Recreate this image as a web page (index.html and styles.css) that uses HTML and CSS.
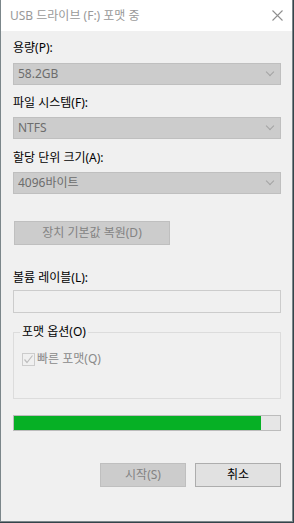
FILE: index.html
```html
<!DOCTYPE html>
<html lang="ko">
<head>
  <meta charset="UTF-8">
  <meta name="viewport" content="width=device-width, initial-scale=1.0">
  <title>USB 드라이브 (F:) 포맷 중</title>
  <link rel="stylesheet" href="styles.css">
</head>
<body>
  <!-- Format dialog -->
  <div class="window">
    <header class="titlebar">
      <span class="title">USB 드라이브 (F:) 포맷 중</span>
      <svg class="close" width="11" height="11" viewBox="0 0 11 11">
        <path d="M0.5 0.5 L10.5 10.5 M10.5 0.5 L0.5 10.5" stroke="#8f8f8f" stroke-width="1.1" fill="none"/>
      </svg>
    </header>

    <main class="content">
      <label class="label">용량(P):</label>
      <div class="combo"><span>58.2GB</span><i class="chev"></i></div>

      <label class="label gap">파일 시스템(F):</label>
      <div class="combo"><span>NTFS</span><i class="chev"></i></div>

      <label class="label gap2">할당 단위 크기(A):</label>
      <div class="combo"><span>4096바이트</span><i class="chev"></i></div>

      <button class="btn disabled restore">장치 기본값 복원(D)</button>

      <label class="label volume">볼륨 레이블(L):</label>
      <div class="textbox"></div>

      <fieldset class="group">
        <legend>포맷 옵션(O)</legend>
        <div class="check-row">
          <span class="checkbox">
            <svg width="11" height="11" viewBox="0 0 11 11">
              <path d="M1.5 5.5 L4 8.5 L9.5 1.5" stroke="#bdbdbd" stroke-width="1.2" fill="none"/>
            </svg>
          </span>
          <span class="check-text">빠른 포맷(Q)</span>
        </div>
      </fieldset>

      <div class="progress"><div class="progress-fill" style="width: 92.9%"></div></div>

      <div class="actions">
        <button class="btn disabled">시작(S)</button>
        <button class="btn">취소</button>
      </div>
    </main>
  </div>
</body>
</html>
```

FILE: styles.css
```css
/* Reset */
* {
  margin: 0;
  padding: 0;
  box-sizing: border-box;
}

body {
  background-color: #34444a;
  font-family: 'Noto Sans', 'Noto Sans CJK KR', sans-serif;
  font-size: 12px;
  line-height: 16px;
  color: #000;
}

/* Window frame */
.window {
  width: 293px;
  height: 522px;
  background-color: #f0f0f0;
  border: 1px solid #7b868a;
  border-top: none;
  display: flex;
  flex-direction: column;
}

.titlebar {
  height: 31px;
  background-color: #ffffff;
  display: flex;
  align-items: center;
  justify-content: space-between;
  padding: 0 9px 0 9px;
}

.title {
  color: #999999;
  font-size: 12px;
}

.close {
  margin-top: 0;
}

/* Content */
.content {
  display: flex;
  flex-direction: column;
  padding: 9px 11px 0 12px;
}

.label {
  display: block;
  height: 16px;
  margin-bottom: 7px;
}

.label.gap {
  margin-top: 10px;
  margin-bottom: 6px;
}

.label.gap2 {
  margin-top: 11px;
  margin-bottom: 6px;
}

.label.volume {
  margin-top: 25px;
  margin-bottom: 4px;
}

.combo {
  height: 22px;
  background-color: #cccccc;
  border: 1px solid #bfbfbf;
  display: flex;
  align-items: center;
  justify-content: space-between;
  padding: 0 5px 0 4px;
  color: #6d6d6d;
}

.chev {
  width: 6px;
  height: 6px;
  border-right: 1px solid #a3a3a3;
  border-bottom: 1px solid #a3a3a3;
  transform: rotate(45deg);
  margin-top: -4px;
  margin-right: 2px;
}

/* Buttons */
.btn {
  font-family: inherit;
  font-size: 12px;
  line-height: 16px;
  height: 24px;
  width: 86px;
  background-color: #e1e1e1;
  border: 1px solid #adadad;
  color: #000;
}

.btn.disabled {
  background-color: #cccccc;
  border-color: #bfbfbf;
  color: #838383;
}

.restore {
  width: 156px;
  margin-top: 27px;
  margin-left: 1px;
}

.textbox {
  height: 23px;
  background-color: #f0f0f0;
  border: 1px solid #cccccc;
}

/* Group box */
.group {
  margin-top: 11px;
  height: 75px;
  border: 1px solid #dcdcdc;
  padding: 0 6px;
}

.group legend {
  padding: 0 2px;
}

.check-row {
  display: flex;
  align-items: center;
  margin-top: 11px;
  margin-left: 2px;
  gap: 2px;
}

.checkbox {
  width: 13px;
  height: 13px;
  border: 1px solid #cccccc;
  background-color: #f0f0f0;
  display: flex;
  align-items: center;
  justify-content: center;
}

.check-text {
  color: #8a8a8a;
}

/* Progress */
.progress {
  margin-top: 16px;
  height: 16px;
  border: 1px solid #bcbcbc;
  background-color: #e6e6e6;
}

.progress-fill {
  height: 100%;
  background-color: #06b025;
}

.actions {
  display: flex;
  justify-content: flex-end;
  gap: 9px;
  margin-top: 32px;
}
```
